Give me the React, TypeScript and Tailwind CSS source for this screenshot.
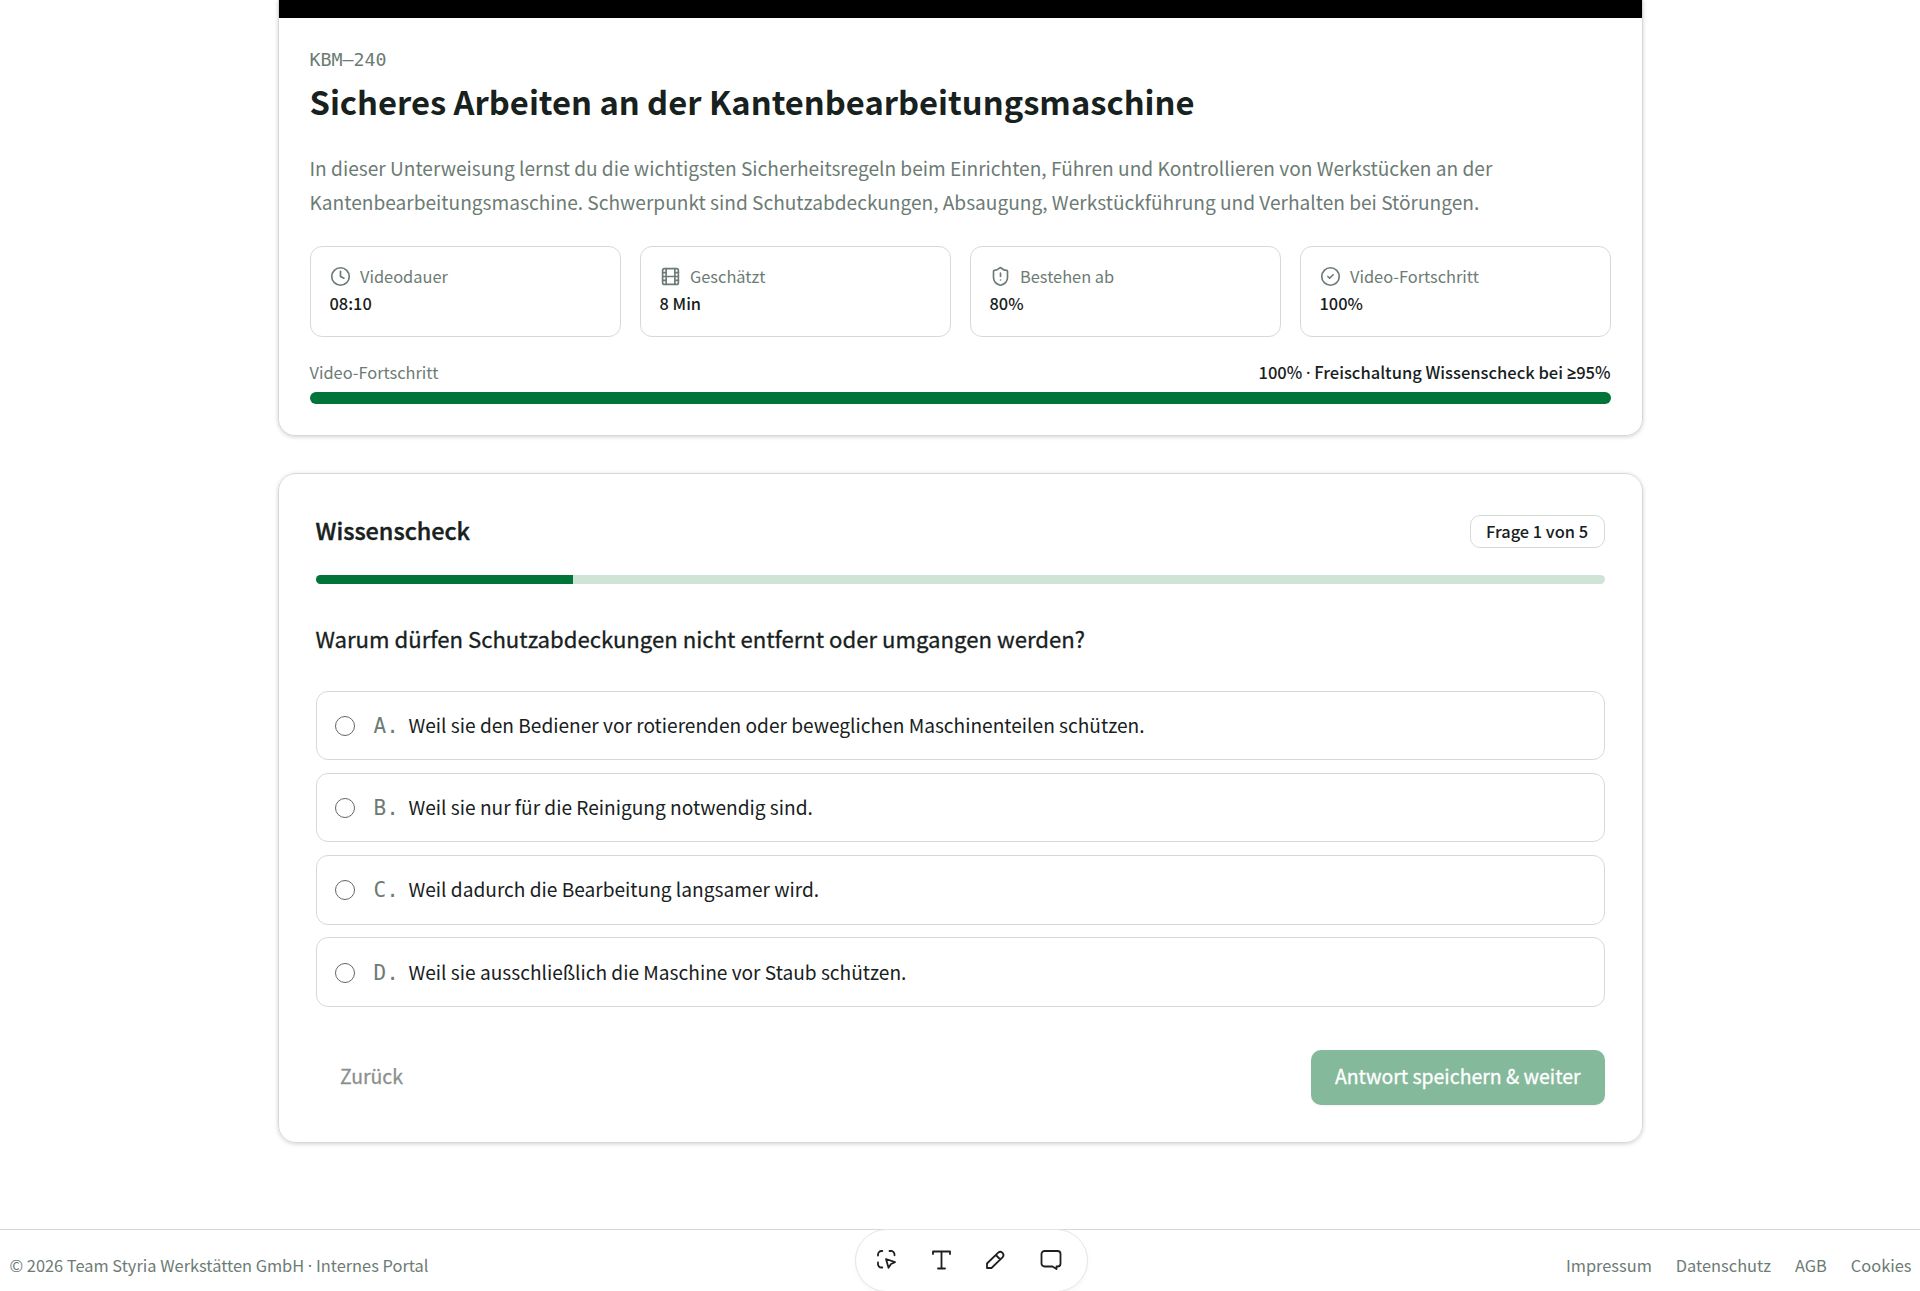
import React from 'react';
import { Clock, Film, ShieldAlert } from 'lucide-react';

interface StatCardProps {
  label: string;
  value: string;
  icon: React.ReactNode;
}

const iconClass = 'size-[21px] shrink-0 [stroke-width:1.9]';

const stats: StatCardProps[] = [
  { label: 'Videodauer', value: '08:10', icon: <Clock className={iconClass} /> },
  { label: 'Geschätzt', value: '8 Min', icon: <Film className={iconClass} /> },
  { label: 'Bestehen ab', value: '80%', icon: <ShieldAlert className={iconClass} /> },
  {
    label: 'Video-Fortschritt',
    value: '100%',
    icon: (
      <svg viewBox="0 0 24 24" fill="none" stroke="currentColor" strokeLinecap="round" strokeLinejoin="round" className={iconClass}>
        <circle cx="12" cy="12" r="10" />
        <path d="m9 12 2 2 4-4" />
      </svg>
    ),
  },
];

const answers = [
  { letter: 'A', text: 'Weil sie den Bediener vor rotierenden oder beweglichen Maschinenteilen schützen.' },
  { letter: 'B', text: 'Weil sie nur für die Reinigung notwendig sind.' },
  { letter: 'C', text: 'Weil dadurch die Bearbeitung langsamer wird.' },
  { letter: 'D', text: 'Weil sie ausschließlich die Maschine vor Staub schützen.' },
];

const footerLinks = ['Impressum', 'Datenschutz', 'AGB', 'Cookies'];

const StatCard: React.FC<StatCardProps> = ({ label, value, icon }) => (
  <div className="h-[91px] rounded-[12px] border border-[#d3dbd7] pt-[16px] pl-[19px] text-[16.4px] leading-[27px]">
    <div className="flex items-center gap-[9.5px] text-[#6c7b74]">
      {icon}
      <span>{label}</span>
    </div>
    <div className="font-medium">{value}</div>
  </div>
);

// Latin-width punctuation, the CJK face draws these full width
const Narrow: React.FC<{ children: React.ReactNode }> = ({ children }) => (
  <span className="font-['Noto_Sans','Open_Sans',sans-serif]">{children}</span>
);

const toolClass = 'size-[22px] fill-none stroke-current [stroke-width:1.8] [stroke-linecap:round] [stroke-linejoin:round]';

const Toolbar = () => (
  <div className="absolute -top-px left-[855px] flex h-[63px] w-[233px] items-center gap-[32.5px] rounded-full border border-[#e3e6e5] bg-white pl-[20px] text-[#1f1f1f] shadow-[0_2px_5px_rgba(0,0,0,0.04)]">
    <svg viewBox="0 0 22 22" className={toolClass}>
      <path d="M2 6.5v-1A3.5 3.5 0 0 1 5.5 2h.8M13.5 2h1A3.5 3.5 0 0 1 18.5 5.5v.8M2 13.5v1A3.5 3.5 0 0 0 5.5 18.5h.8" />
      <path d="m10 10 9 3.2-4 1.8-2.5 3.7z" />
    </svg>
    <svg viewBox="0 0 22 22" className={toolClass}>
      <path d="M2 5V2.5h17V5M10.5 2.5v17M7 19.5h7" />
    </svg>
    <svg viewBox="0 0 22 22" className={toolClass}>
      <path d="M2 19v-4.5L13.2 3.6a3.2 3.2 0 0 1 4.5 4.5L6.500 19zM10.8 6l4.5 4.5" />
    </svg>
    <svg viewBox="0 0 22 22" className={toolClass}>
      <path d="M4.5 2h13A3 3 0 0 1 20.5 5v9.5a3 3 0 0 1-3 3h-1v2.500l-4-2.500h-8a3 3 0 0 1-3-3V5a3 3 0 0 1 3-3z" />
    </svg>
  </div>
);

const App: React.FC = () => {
  return (
    <div className="h-[1291px] overflow-hidden bg-white font-['Noto_Sans_CJK_SC',sans-serif] text-[#17211d]">
      <main className="mx-auto flex w-[1365px] flex-col">
        <section className="h-[435.5px] overflow-hidden rounded-b-[17px] border border-t-0 border-[#d3dbd7] shadow-[0_1px_4px_rgba(0,0,0,0.18)]">
          <div className="h-[17.5px] bg-black" />
          <div className="px-[31px] pt-[28px]">
            <p className="font-['DejaVu_Sans_Mono',monospace] text-[18.3px] leading-[27px] text-[#6c7b74]">KBM–240</p>
            <h1 className="mt-[7.5px] text-[32.72px] leading-[41px] font-bold">
              Sicheres Arbeiten an der Kantenbearbeitungsmaschine
            </h1>
            <p className="mt-[30px] text-[19.12px] leading-[34.3px] text-[#6c7b74]">
              In dieser Unterweisung lernst du die wichtigsten Sicherheitsregeln beim Einrichten, Führen und Kontrollieren von Werkstücken an der
              <br />
              Kantenbearbeitungsmaschine. Schwerpunkt sind Schutzabdeckungen, Absaugung, Werkstückführung und Verhalten bei Störungen.
            </p>
            <div className="mt-[26px] grid grid-cols-4 gap-[19px]">
              {stats.map((stat) => (
                <StatCard key={stat.label} {...stat} />
              ))}
            </div>
            <div className="mt-[23px] flex justify-between text-[16.4px] leading-[24px]">
              <span className="text-[#6c7b74]">Video-Fortschritt</span>
              <span className="text-[16.55px] font-medium">
                100% <Narrow>·</Narrow> Freischaltung Wissenscheck bei <Narrow><b>≥</b></Narrow>95%
              </span>
            </div>
            <div className="mt-[7px] h-[12px] rounded-full bg-[#007439]" />
          </div>
        </section>

        <section className="mt-[37.5px] h-[670px] rounded-[18px] border border-[#d3dbd7] px-[37px] pt-[41px] shadow-[0_1px_4px_rgba(0,0,0,0.18)]">
          <div className="flex h-[34px] items-start justify-between">
            <h2 className="text-[23.4px] leading-[31px] font-medium [-webkit-text-stroke:0.4px]">Wissenscheck</h2>
            <span className="h-[33px] rounded-[10px] border border-[#d3dbd7] px-[15.5px] text-[16.4px] leading-[30px] font-medium">
              Frage 1 von 5
            </span>
          </div>
          <div className="mt-[26px] h-[9px] overflow-hidden rounded-full bg-[#cfe3d7]">
            <div className="h-full w-1/5 bg-[#007439]" />
          </div>
          <h3 className="mt-[39px] text-[22.15px] leading-[30px] [-webkit-text-stroke:0.3px]">
            Warum dürfen Schutzabdeckungen nicht entfernt oder umgangen werden?
          </h3>
          <div className="mt-[37.5px] flex flex-col gap-[12.8px]">
            {answers.map((answer) => (
              <label key={answer.letter} className="flex h-[69.5px] items-center rounded-[12px] border border-[#d3dbd7] pt-px pl-[18.5px]">
                <span className="size-[20px] rounded-full border-[1.5px] border-[#666]" />
                <span className="flex items-baseline pb-[1px] pl-[18.5px] text-[19.12px] leading-[30px]">
                  <span className="w-[35px] font-['DejaVu_Sans_Mono',monospace] text-[21px] text-[#6c7b74]">{answer.letter}.</span>
                  {answer.text}
                </span>
              </label>
            ))}
          </div>
          <div className="mt-[43.4px] flex items-center justify-between text-[19.45px] leading-[52px]">
            <button className="h-[55px] pb-[3px] pl-[24.5px] text-[#8b908e] [-webkit-text-stroke:0.3px]">Zurück</button>
            <button className="h-[55px] rounded-[10px] bg-[#85b99b] px-[24px] pb-[3px] text-white shadow-[0_1px_2px_rgba(0,0,0,0.06)] [-webkit-text-stroke:0.3px]">
              Antwort speichern &amp; weiter
            </button>
          </div>
        </section>
      </main>

      <footer className="relative mt-[85.5px] flex h-[63px] justify-between border-t border-[#d3dbd7] pr-[8.5px] pl-[9.5px] text-[16.4px] leading-[70.5px] text-[#6c7b74]">
        <span>
          © 2026 Team Styria Werkstätten GmbH <Narrow>·</Narrow> Internes Portal
        </span>
        <nav className="flex gap-[24px]">
          {footerLinks.map((link) => (
            <a key={link}>{link}</a>
          ))}
        </nav>
        <Toolbar />
      </footer>
    </div>
  );
};

export default App;
